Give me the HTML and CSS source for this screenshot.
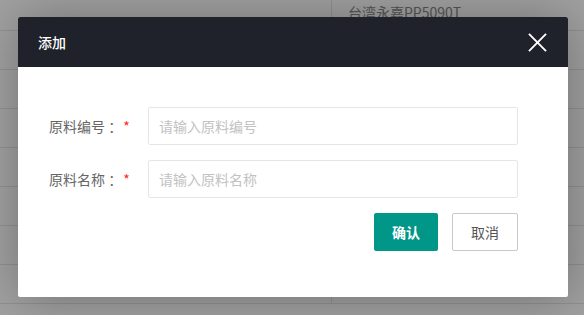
FILE: index.html
```html
<!DOCTYPE html>
<html lang="zh-CN">
  <head>
    <meta charset="UTF-8" />
    <meta name="viewport" content="width=device-width, initial-scale=1.0" />
    <title>添加</title>
    <link rel="stylesheet" href="styles.css">
  </head>
  <body>
    <div class="table">
      <div class="table__row table__row--first">
        <div class="table__cell table__cell--main"></div>
        <div class="table__cell">台湾永嘉PP5090T</div>
      </div>
      <div class="table__row"><div class="table__cell table__cell--main"></div><div class="table__cell"></div></div>
      <div class="table__row"><div class="table__cell table__cell--main"></div><div class="table__cell"></div></div>
      <div class="table__row"><div class="table__cell table__cell--main"></div><div class="table__cell"></div></div>
      <div class="table__row"><div class="table__cell table__cell--main"></div><div class="table__cell"></div></div>
      <div class="table__row"><div class="table__cell table__cell--main"></div><div class="table__cell"></div></div>
      <div class="table__row"><div class="table__cell table__cell--main"></div><div class="table__cell"></div></div>
      <div class="table__row"><div class="table__cell table__cell--main"></div><div class="table__cell"></div></div>
    </div>
    <div class="shade"></div>

    <div class="dialog">
      <div class="dialog__header">
        <h2 class="dialog__title">添加</h2>
        <button class="dialog__close" type="button">
          <svg class="dialog__close-icon" viewBox="0 0 20 20" fill="none" stroke="currentColor" stroke-width="2">
            <path d="M1 1L19 19M19 1L1 19" />
          </svg>
        </button>
      </div>
      <form class="dialog__body">
        <div class="field">
          <label class="field__label">原料编号 <span class="field__colon">：</span><span class="field__req">*</span></label>
          <input class="field__input" type="text" placeholder="请输入原料编号" />
        </div>
        <div class="field">
          <label class="field__label">原料名称 <span class="field__colon">：</span><span class="field__req">*</span></label>
          <input class="field__input" type="text" placeholder="请输入原料名称" />
        </div>
        <div class="dialog__actions">
          <button class="btn btn--primary" type="button">确认</button>
          <button class="btn btn--default" type="button">取消</button>
        </div>
      </form>
    </div>
  </body>
</html>
```

FILE: styles.css
```css
* {
  margin: 0;
  padding: 0;
  box-sizing: border-box;
}
html {
  overflow: hidden;
}
body {
  position: relative;
  height: 315px;
  overflow: hidden;
  font-family: "Noto Sans CJK SC", "Noto Sans", sans-serif;
  font-size: 14px;
  color: #666;
  background-color: #fff;
}
.table__row {
  display: flex;
  height: 39px;
  border-bottom: 1px solid #e6e6e6;
}
.table__row--first {
  height: 31px;
}
.table__cell {
  flex: 1;
  padding: 2px 16px 0;
  line-height: 20px;
  color: #888;
}
.table__cell--main {
  flex: 0 0 332px;
  border-right: 1px solid #e6e6e6;
}
.shade {
  position: absolute;
  inset: 0;
  background-color: rgba(0, 0, 0, 0.37);
}
.dialog {
  position: absolute;
  top: 17px;
  left: 18px;
  width: 550px;
  height: 280px;
  background-color: #fff;
  border-radius: 2px;
  box-shadow: 1px 1px 50px rgba(0, 0, 0, 0.3);
  overflow: hidden;
}
.dialog__header {
  display: flex;
  align-items: center;
  justify-content: space-between;
  height: 50px;
  padding: 0 21px 0 20px;
  background-color: #1f222a;
}
.dialog__title {
  font-size: 14px;
  font-weight: 500;
  color: #fff;
}
.dialog__close {
  display: flex;
  background: none;
  border: none;
  color: #fff;
  cursor: pointer;
}
.dialog__close-icon {
  width: 19px;
  height: 19px;
}
.dialog__body {
  display: flex;
  flex-direction: column;
  gap: 15px;
  padding: 40px 50px 0 31px;
}
.field {
  display: flex;
  align-items: center;
}
.field__label {
  flex: 0 0 99px;
  white-space: nowrap;
  color: #666;
}
.field__colon {
  font-family: "Noto Sans CJK TC", "Noto Sans CJK SC", sans-serif;
}
.field__req {
  margin-left: 1px;
  color: #f22;
}
.field__input {
  flex: 1;
  height: 38px;
  padding: 0 10px;
  border: 1px solid #e6e6e6;
  border-radius: 2px;
  font-family: inherit;
  font-size: 14px;
  color: #333;
  outline: none;
}
.field__input::placeholder {
  color: #c2c2c2;
}
.dialog__actions {
  display: flex;
  justify-content: flex-end;
  gap: 14px;
}
.btn {
  height: 38px;
  padding: 0 18px;
  border-radius: 2px;
  font-family: inherit;
  font-size: 14px;
  cursor: pointer;
}
.btn--primary {
  border: none;
  background-color: #009688;
  color: #fff;
  font-weight: 600;
}
.btn--default {
  border: 1px solid #c9c9c9;
  background-color: #fff;
  color: #555;
}
```
